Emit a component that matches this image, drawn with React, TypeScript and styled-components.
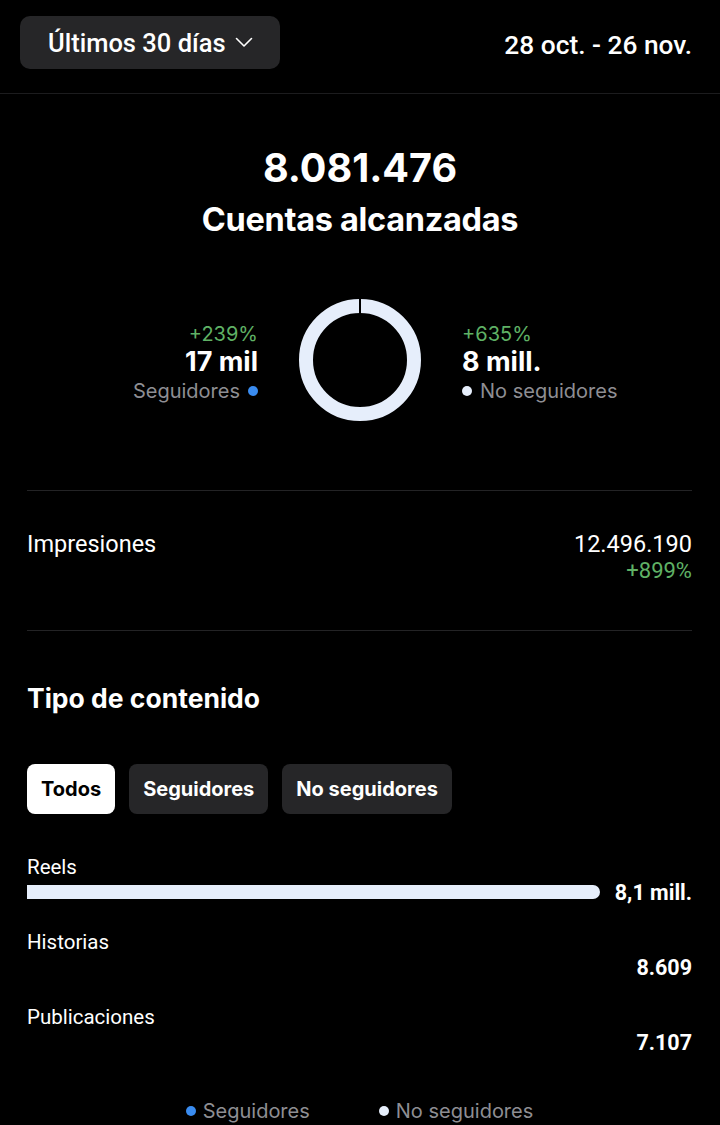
import styled, { createGlobalStyle } from 'styled-components'

const GlobalStyle = createGlobalStyle`
  body {
    margin: 0;
    background: #000;
    color: #fff;
    font-family: 'Inter', 'Liberation Sans', sans-serif;
  }
`

const Page = styled.div`
  width: 720px;
  min-height: 1125px;
  background: #000;
  overflow: hidden;
`

const Header = styled.header`
  display: flex;
  align-items: center;
  justify-content: space-between;
  padding: 16px 28px 24px 20px;
  border-bottom: 1px solid #1c1c1e;
`

const RangeButton = styled.button`
  display: flex;
  align-items: center;
  gap: 9px;
  height: 53px;
  width: 260px;
  padding: 0 0 0 28px;
  border: none;
  border-radius: 10px;
  background: #262628;
  color: #fff;
  font-family: 'Roboto', sans-serif;
  font-size: 25.5px;
  font-weight: 500;
`

const DateRange = styled.span`
  font-family: 'Roboto', sans-serif;
  font-size: 26.3px;
  font-weight: 500;
  padding-top: 4px;
`

const Hero = styled.section`
  display: flex;
  flex-direction: column;
  align-items: center;
  padding-top: 50px;
`

const BigNumber = styled.div`
  font-size: 39.5px;
  font-weight: 700;
  line-height: 48px;
`

const HeroTitle = styled.h1`
  margin: 8px 0 0;
  font-size: 32.5px;
  font-weight: 700;
  line-height: 40px;
  letter-spacing: -0.3px;
`

const SplitRow = styled.div`
  display: grid;
  grid-template-columns: 1fr 122px 1fr;
  column-gap: 41px;
  align-items: center;
  margin-top: 59px;
  width: 100%;
`

const Stat = styled.div<{ $align: 'left' | 'right' }>`
  display: flex;
  flex-direction: column;
  align-items: ${({ $align }) => ($align === 'right' ? 'flex-end' : 'flex-start')};
  padding-top: 6px;
`

const Change = styled.span`
  color: #5fb165;
  font-size: 20px;
  line-height: 26px;
`

const StatValue = styled.span`
  font-size: 27px;
  font-weight: 700;
  line-height: 30px;
`

const StatLabel = styled.span`
  display: flex;
  align-items: center;
  gap: 8px;
  color: #8e8e93;
  font-size: 20px;
  line-height: 28px;
`

const Dot = styled.span<{ $color: string }>`
  width: 10px;
  height: 10px;
  border-radius: 50%;
  background: ${({ $color }) => $color};
`

const Section = styled.section`
  margin: 69px 28px 0 27px;
`

const Divider = styled.hr`
  border: none;
  border-top: 1px solid #232325;
  margin: 0;
`

const MetricRow = styled.div`
  display: flex;
  justify-content: space-between;
  padding: 39px 0 46px;
  font-family: 'Roboto', sans-serif;
`

const MetricLabel = styled.span`
  font-size: 23.5px;
  line-height: 28px;
`

const MetricValues = styled.div`
  display: flex;
  flex-direction: column;
  align-items: flex-end;
  font-size: 23.5px;
  line-height: 28px;

  ${Change} {
    font-family: 'Roboto', sans-serif;
    font-size: 22px;
  }
`

const SectionTitle = styled.h2`
  margin: 51px 0 0;
  font-size: 26.5px;
  font-weight: 700;
  line-height: 32px;
`

const Chips = styled.div`
  display: flex;
  gap: 14px;
  margin-top: 50px;
`

const Chip = styled.button<{ $active?: boolean }>`
  height: 50px;
  padding: 0 14px;
  border: none;
  border-radius: 8px;
  background: ${({ $active }) => ($active ? '#fff' : '#262628')};
  color: ${({ $active }) => ($active ? '#000' : '#fff')};
  font-family: 'Inter', sans-serif;
  font-size: 20px;
  font-weight: 700;
`

const Bars = styled.div`
  display: flex;
  flex-direction: column;
  gap: 25px;
  margin-top: 41px;
`

const BarItem = styled.div`
  display: flex;
  flex-direction: column;
`

const BarLabel = styled.span`
  font-family: 'Roboto', sans-serif;
  font-size: 20.5px;
  line-height: 24px;
`

const BarLine = styled.div`
  display: flex;
  align-items: center;
  gap: 15px;
  height: 26px;
`

const Track = styled.div`
  flex: 1;
  height: 14px;
  display: flex;
`

const Fill = styled.div`
  height: 100%;
  background: #e6eefb;
  border-radius: 0 7px 7px 0;
`

const BarValue = styled.span`
  font-family: 'Roboto', sans-serif;
  font-size: 21.5px;
  font-weight: 700;
`

const Legend = styled.div`
  display: flex;
  justify-content: center;
  gap: 69px;
  margin-top: 42px;

  ${StatLabel} {
    gap: 7px;
  }
`

const Donut = () => (
  <svg width="122" height="122" viewBox="0 0 122 122">
    <circle cx="61" cy="61" r="54" fill="none" stroke="#e6eefb" strokeWidth="14" />
    <rect x="60" y="0" width="2" height="15" fill="#000" />
  </svg>
)

const Chevron = () => (
  <svg width="18" height="11" viewBox="0 0 18 11">
    <path d="M1.5 1.5 L9 9 L16.5 1.5" fill="none" stroke="#fff" strokeWidth="1.6" strokeLinecap="round" strokeLinejoin="round" />
  </svg>
)

const content = [
  { label: 'Reels', value: '8,1 mill.', share: 100 },
  { label: 'Historias', value: '8.609', share: 0 },
  { label: 'Publicaciones', value: '7.107', share: 0 },
]

export default function App() {
  return (
    <Page>
      <GlobalStyle />
      <Header>
        <RangeButton>
          Últimos 30 días <Chevron />
        </RangeButton>
        <DateRange>28 oct. - 26 nov.</DateRange>
      </Header>

      <Hero>
        <BigNumber>8.081.476</BigNumber>
        <HeroTitle>Cuentas alcanzadas</HeroTitle>
        <SplitRow>
          <Stat $align="right">
            <Change>+239%</Change>
            <StatValue>17 mil</StatValue>
            <StatLabel>
              Seguidores <Dot $color="#3a8cf0" />
            </StatLabel>
          </Stat>
          <Donut />
          <Stat $align="left">
            <Change>+635%</Change>
            <StatValue>8 mill.</StatValue>
            <StatLabel>
              <Dot $color="#e6eefb" /> No seguidores
            </StatLabel>
          </Stat>
        </SplitRow>
      </Hero>

      <Section>
        <Divider />
        <MetricRow>
          <MetricLabel>Impresiones</MetricLabel>
          <MetricValues>
            12.496.190
            <Change>+899%</Change>
          </MetricValues>
        </MetricRow>
        <Divider />

        <SectionTitle>Tipo de contenido</SectionTitle>
        <Chips>
          <Chip $active>Todos</Chip>
          <Chip>Seguidores</Chip>
          <Chip>No seguidores</Chip>
        </Chips>

        <Bars>
          {content.map((item) => (
            <BarItem key={item.label}>
              <BarLabel>{item.label}</BarLabel>
              <BarLine>
                <Track>
                  {item.share > 0 && <Fill style={{ width: `${item.share}%` }} />}
                </Track>
                <BarValue>{item.value}</BarValue>
              </BarLine>
            </BarItem>
          ))}
        </Bars>

        <Legend>
          <StatLabel>
            <Dot $color="#3a8cf0" /> Seguidores
          </StatLabel>
          <StatLabel>
            <Dot $color="#e6eefb" /> No seguidores
          </StatLabel>
        </Legend>
      </Section>
    </Page>
  )
}
